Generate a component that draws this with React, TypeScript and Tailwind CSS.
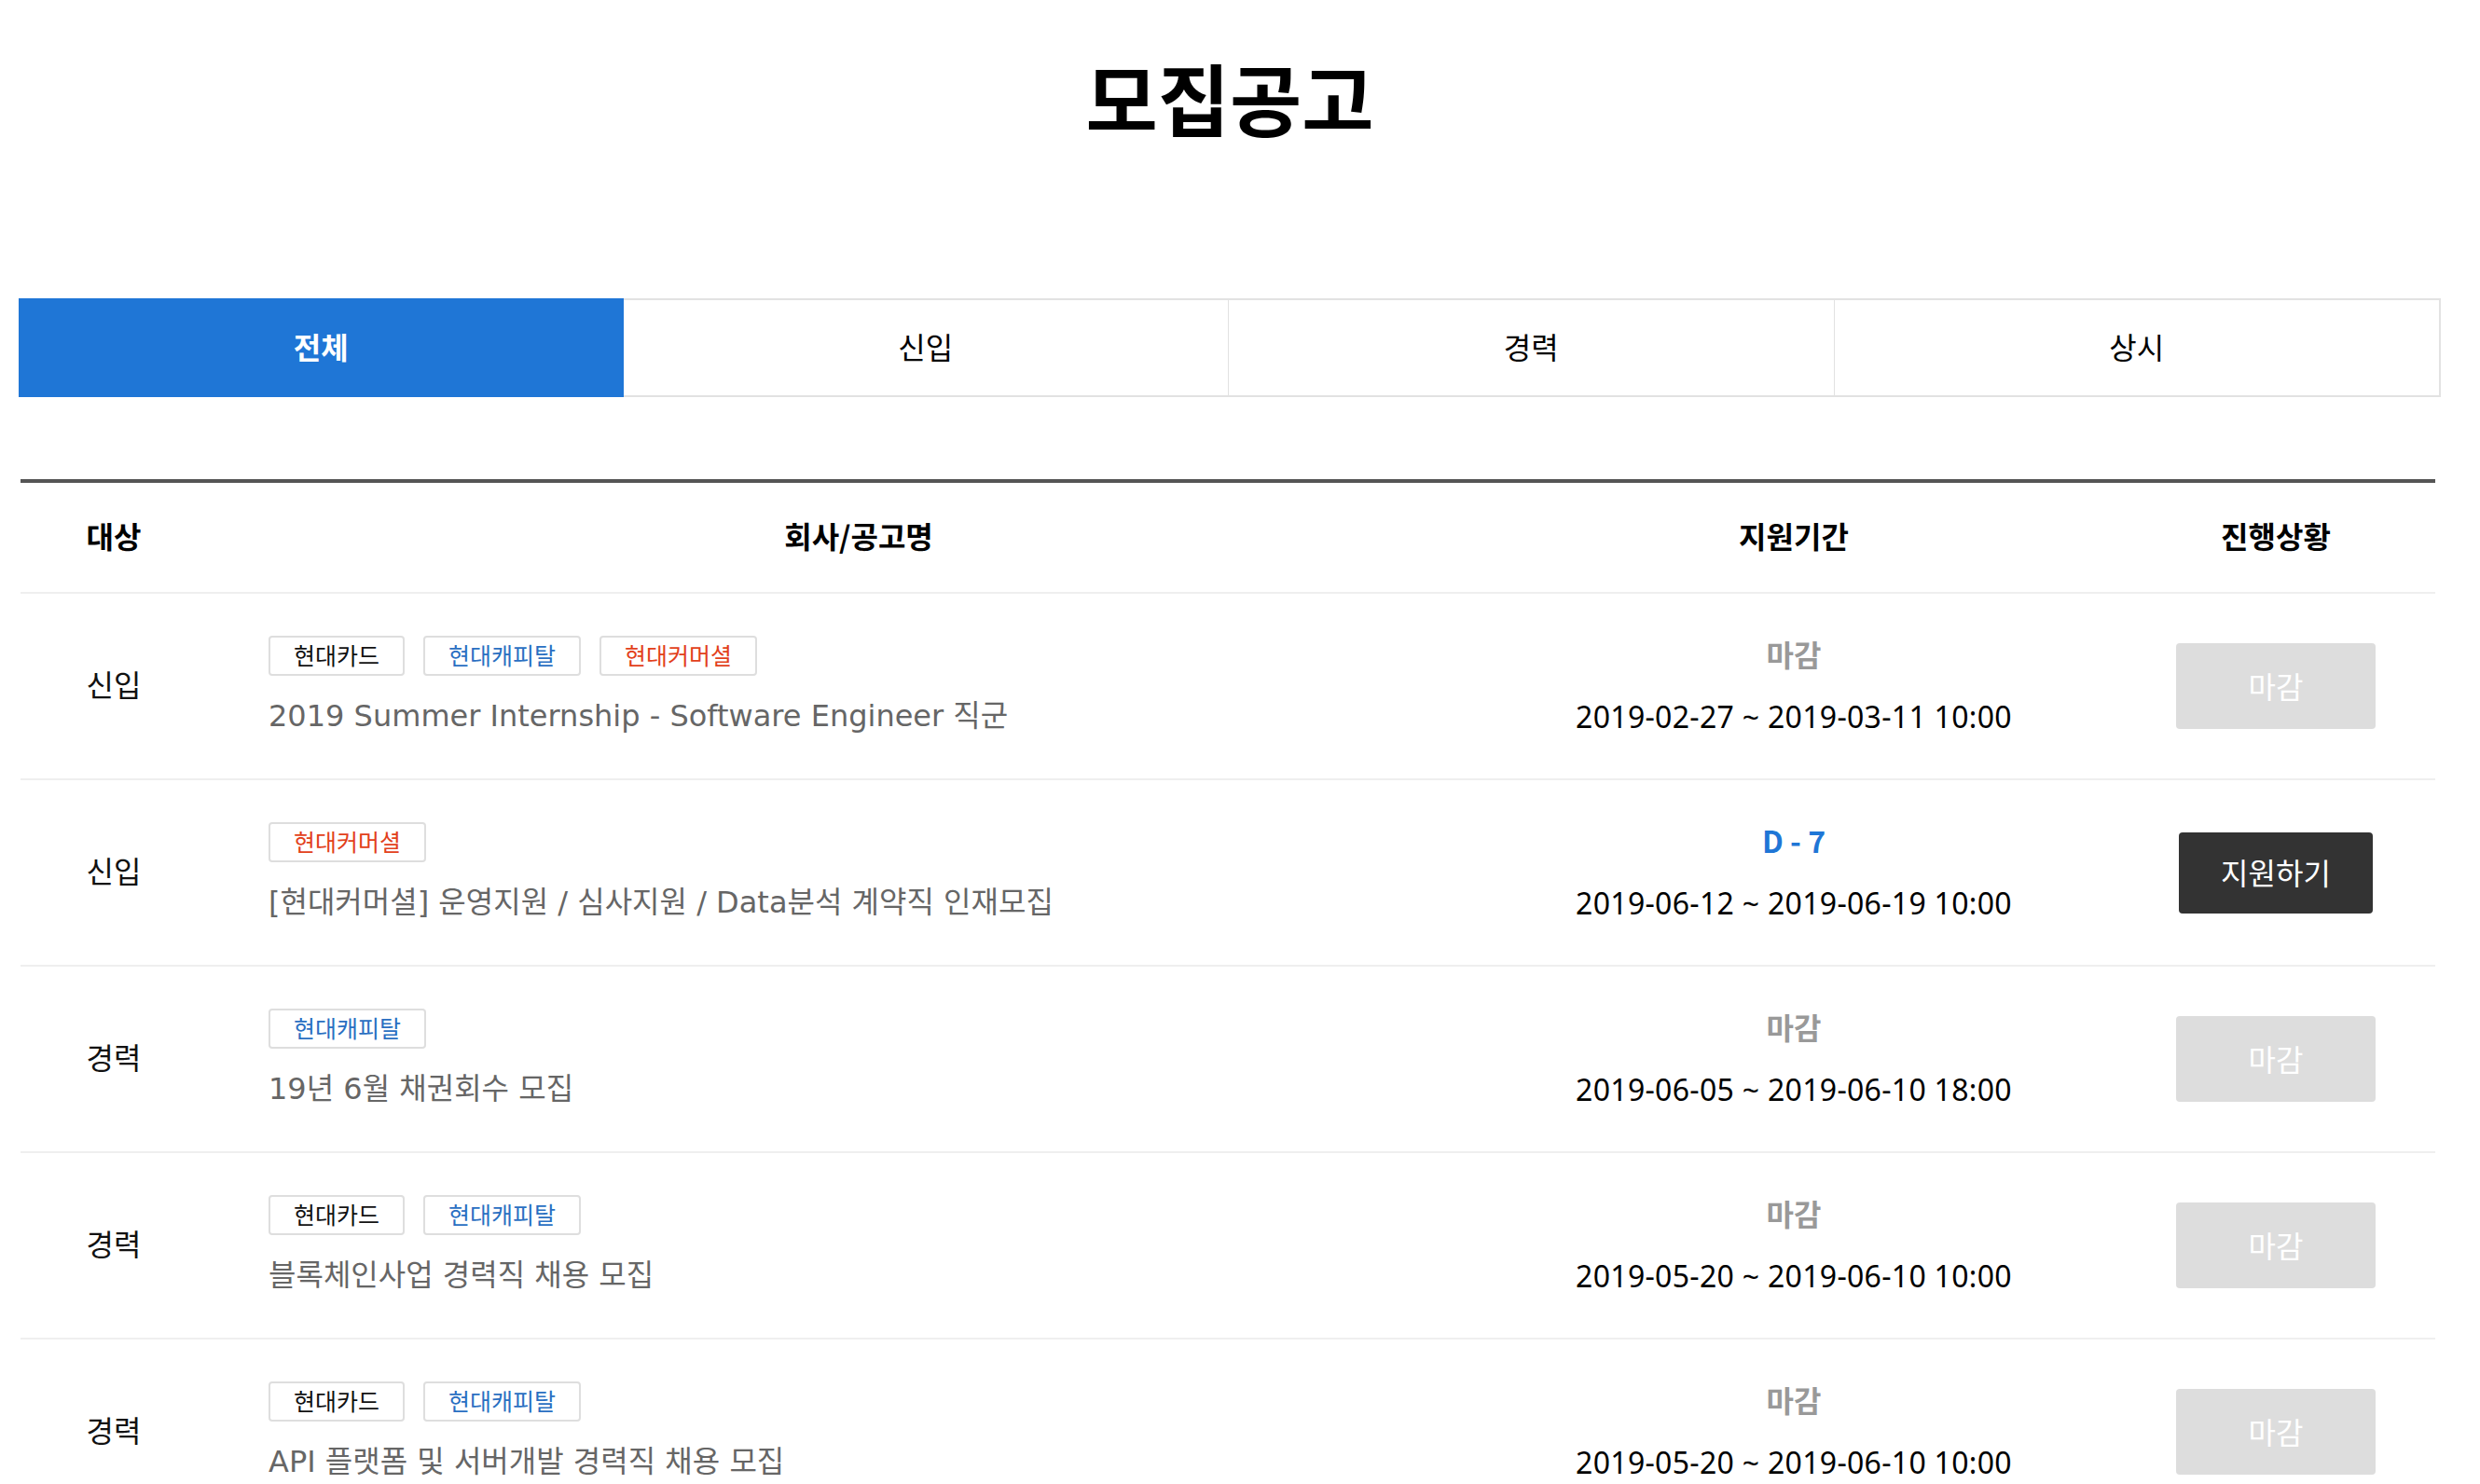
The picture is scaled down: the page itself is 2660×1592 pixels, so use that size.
import { FC } from "react";

type Tag = { name: string; color: string };

const CARD: Tag = { name: "현대카드", color: "text-[#111111]" };
const CAPITAL: Tag = { name: "현대캐피탈", color: "text-[#2a6fc2]" };
const COMMERCIAL: Tag = { name: "현대커머셜", color: "text-[#e2401a]" };

const jobs = [
  {
    type: "신입",
    tags: [CARD, CAPITAL, COMMERCIAL],
    title: "2019 Summer Internship - Software Engineer 직군",
    status: "마감",
    period: "2019-02-27 ~ 2019-03-11 10:00",
    open: false,
  },
  {
    type: "신입",
    tags: [COMMERCIAL],
    title: "[현대커머셜] 운영지원 / 심사지원 / Data분석 계약직 인재모집",
    status: "D - 7",
    period: "2019-06-12 ~ 2019-06-19 10:00",
    open: true,
  },
  {
    type: "경력",
    tags: [CAPITAL],
    title: "19년 6월 채권회수 모집",
    status: "마감",
    period: "2019-06-05 ~ 2019-06-10 18:00",
    open: false,
  },
  {
    type: "경력",
    tags: [CARD, CAPITAL],
    title: "블록체인사업 경력직 채용 모집",
    status: "마감",
    period: "2019-05-20 ~ 2019-06-10 10:00",
    open: false,
  },
  {
    type: "경력",
    tags: [CARD, CAPITAL],
    title: "API 플랫폼 및 서버개발 경력직 채용 모집",
    status: "마감",
    period: "2019-05-20 ~ 2019-06-10 10:00",
    open: false,
  },
];

const tabs = ["전체", "신입", "경력", "상시"];

const App: FC = () => {
  return (
    <div className="min-h-screen bg-white font-['Noto_Sans_CJK_KR','Noto_Sans',sans-serif] text-[#111]">
      <div className="ml-[20px] w-[2598px] pt-[62px]">
        <h1 className="text-center text-[84px] font-bold leading-[84px] text-black">모집공고</h1>

        {/* tabs */}
        <div className="mt-[174px] flex h-[106px]">
          {tabs.map((tab, index) =>
            index === 0 ? (
              <div
                key={tab}
                className="flex flex-1 items-center justify-center bg-[#1f76d6] pb-[5px] text-[32px] font-bold text-white"
              >
                {tab}
              </div>
            ) : (
              <div
                key={tab}
                className={`flex flex-1 items-center justify-center border-y-2 border-[#e2e2e2] pb-[5px] text-[32px] text-black ${
                  index === 3 ? "border-r-2" : "border-r"
                }`}
              >
                {tab}
              </div>
            )
          )}
        </div>

        {/* table */}
        <div className="ml-[2px] mt-[88px] w-[2590px] border-t-4 border-[#555555]">
          <div className="grid h-[119px] grid-cols-[200px_1398px_608px_384px] items-center border-b-2 border-[#efefef] pb-[6px] text-[32px] font-bold text-black">
            <div className="text-center">대상</div>
            <div className="text-center">회사/공고명</div>
            <div className="text-center">지원기간</div>
            <div className="pl-[42px] text-center">진행상황</div>
          </div>

          {jobs.map((job, index) => (
            <div
              key={index}
              className="grid h-[200px] grid-cols-[200px_1398px_608px_384px] items-center border-b-2 border-[#efefef]"
            >
              <div className="pb-[6px] text-center text-[32px] text-[#111]">{job.type}</div>

              <div className="pl-[66px]">
                <div className="flex gap-[20px]">
                  {job.tags.map((tag) => (
                    <span
                      key={tag.name}
                      className={`flex h-[43px] items-center rounded-[4px] border-2 border-[#dedede] px-[25px] pb-[2px] text-[25px] ${tag.color}`}
                    >
                      {tag.name}
                    </span>
                  ))}
                </div>
                <p className="mt-[27px] pb-[6px] text-[32px] leading-[32px] text-[#666666] font-['DejaVu_Sans','Noto_Sans_CJK_KR',sans-serif]">
                  {job.title}
                </p>
              </div>

              <div className="text-center">
                <div
                  className={`flex h-[43px] items-center justify-center pb-[5px] text-[32px] font-bold ${
                    job.open ? "text-[#1f76d6]" : "text-[#999999]"
                  }`}
                >
                  {job.status}
                </div>
                <p className="mt-[28px] pb-[5px] text-[32px] leading-[32px] tracking-[0.3px] text-black font-['Noto_Sans','Noto_Sans_CJK_KR',sans-serif]">
                  {job.period}
                </p>
              </div>

              <div className="flex justify-center pl-[42px]">
                {job.open ? (
                  <button className="flex h-[87px] w-[208px] items-center justify-center rounded-[4px] bg-[#333333] pb-[3px] text-[32px] text-white">
                    지원하기
                  </button>
                ) : (
                  <button className="flex h-[92px] w-[214px] items-center justify-center rounded-[4px] bg-[#dddddd] pb-[3px] text-[32px] text-white">
                    마감
                  </button>
                )}
              </div>
            </div>
          ))}
        </div>
      </div>
    </div>
  );
};

export default App;
